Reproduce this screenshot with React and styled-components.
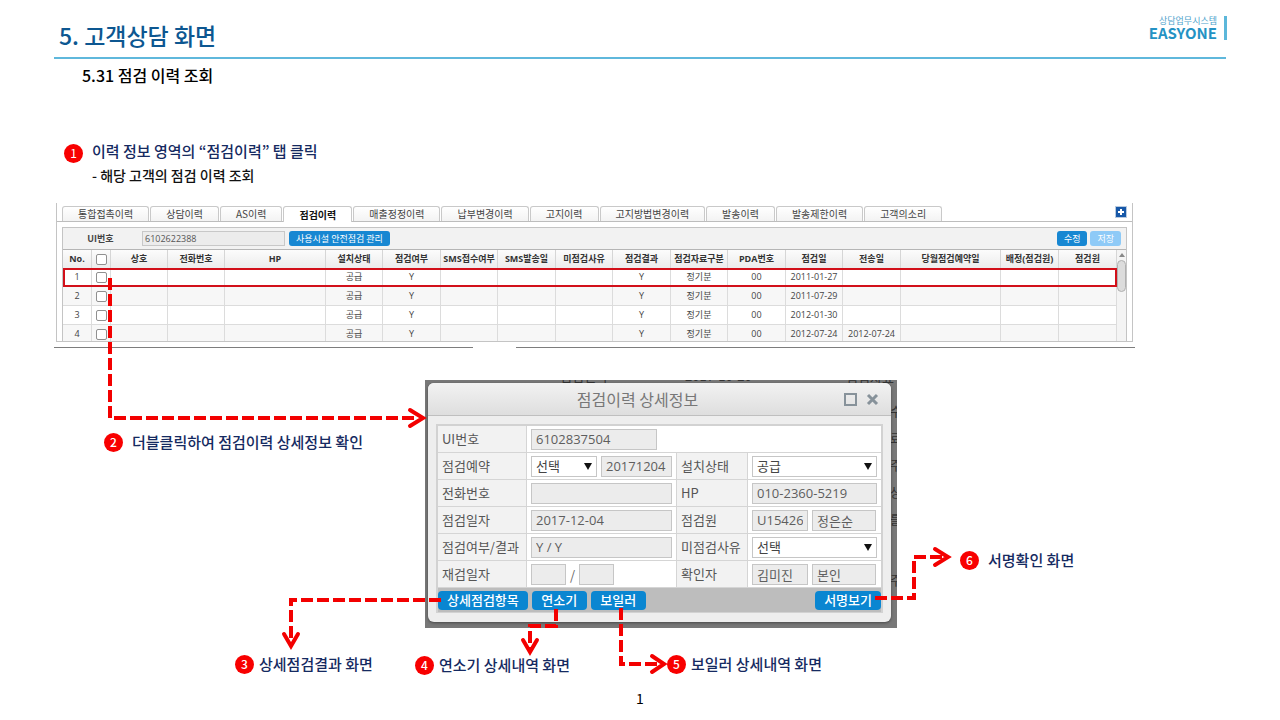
import React from "react";
import styled, { createGlobalStyle, css } from "styled-components";

const GlobalStyle = createGlobalStyle`
  *, *::before, *::after { box-sizing: border-box; }
  body {
    margin: 0;
    background: #fff;
    font-family: "Noto Sans CJK KR", "Noto Sans", sans-serif;
    color: #000;
  }
  h1, h2, h3, p { margin: 0; }
  button, input, select { font-family: inherit; margin: 0; }
`;

const Page = styled.main`
  position: relative;
  display: flex;
  flex-direction: column;
  min-height: 100vh;
`;

const Header = styled.header`
  display: flex;
  justify-content: space-between;
  align-items: flex-start;
  height: 59px;
  margin: 0 54px;
  padding: 16px 0 0 5px;
  border-bottom: 2px solid #5fb8dc;
`;

const Title = styled.h1`
  font-size: 23px;
  line-height: 38px;
  font-weight: 500;
  color: #0d5791;
`;

const Brand = styled.div`
  display: flex;
  flex-direction: column;
  align-items: flex-end;
  height: 24px;
  margin-right: -1px;
  padding-right: 7px;
  border-right: 3px solid #5cb7da;
`;

const BrandSmall = styled.span`
  font-size: 9px;
  line-height: 9px;
  color: #4ea3cc;
`;

const BrandName = styled.strong`
  font-size: 15px;
  line-height: 15px;
  font-weight: 700;
  color: #2492c4;
`;

const Subtitle = styled.h2`
  margin: 0 82px;
  font-size: 16px;
  line-height: 32px;
  font-weight: 500;
`;

const Step = styled.section`
  display: flex;
  align-items: flex-start;
  gap: 9px;
  margin: 48px 64px 0;
`;

const Badge = styled.span`
  flex: none;
  width: 19px;
  height: 19px;
  border-radius: 50%;
  background: #f80000;
  color: #fff;
  font-size: 12px;
  line-height: 18px;
  text-align: center;
`;

const StepBadge = styled(Badge)`
  margin-top: 5px;
`;

const StepTitle = styled.h3`
  font-size: 15px;
  line-height: 24px;
  font-weight: 500;
  color: #152a61;
`;

const StepNote = styled.p`
  font-size: 14px;
  line-height: 24px;
  font-weight: 500;
  color: #111;
`;

const Shot = styled.section`
  margin: 16px 145px 0 54px;
`;

const Panel = styled.div`
  height: 139px;
  margin: 0 2px;
  padding: 3px 5px 0;
  border: solid #c4c4c4;
  border-width: 0 1px 1px;
  overflow: hidden;
`;

const TabBar = styled.nav`
  display: flex;
  gap: 1px;
  height: 16px;
  margin: 0 -5px;
  padding: 0 5px;
  border-bottom: 1px solid #bdbdbd;
`;

const Tab = styled.button`
  height: 15px;
  padding: 0 15px;
  border: 1px solid #c9c9c9;
  border-bottom: 0;
  border-radius: 3px 3px 0 0;
  background: linear-gradient(#fff, #f3f3f3);
  color: #444;
  font-size: 10px;
  line-height: 14px;
  white-space: nowrap;
  ${(p) =>
    p.$active &&
    css`
      height: 16px;
      background: #fff;
      color: #111;
      font-weight: 700;
    `}
`;

const AddButton = styled.button`
  width: 12px;
  height: 12px;
  margin-left: auto;
  padding: 0;
  border: 1px solid #b9cbe0;
  background: #fff;
  svg { display: block; }
`;

const Listing = styled.div`
  margin-top: 5px;
  border: solid #c4c4c4;
  border-width: 1px 1px 0;
`;

const SearchBar = styled.div`
  display: flex;
  align-items: center;
  gap: 4px;
  height: 22px;
  padding-right: 5px;
  background: #f2f2f2;
  border-bottom: 1px solid #b5b5b5;
`;

const SearchLabel = styled.label`
  width: 75px;
  font-size: 9px;
  line-height: 16px;
  font-weight: 700;
  text-align: center;
  color: #444;
`;

const SearchInput = styled.input`
  width: 143px;
  height: 15px;
  padding: 0 2px;
  border: 1px solid #c8c8c8;
  background: #ececec;
  color: #555;
  font-family: "Open Sans", sans-serif;
  font-size: 9px;
  line-height: 13px;
`;

const SmallButton = styled.button`
  height: 15px;
  padding: 0 7px;
  border: 0;
  border-radius: 3px;
  background: ${(p) => (p.$pale ? "#8ecaf7" : "#1787d2")};
  color: #fff;
  font-size: 9px;
  line-height: 15px;
  white-space: nowrap;
`;

const ButtonPair = styled.div`
  display: flex;
  gap: 3px;
  margin-left: auto;
`;

const GridArea = styled.div`
  display: flex;
`;

const Grid = styled.table`
  flex: 1;
  width: 100%;
  table-layout: fixed;
  border-collapse: separate;
  border-spacing: 0;
  font-family: "Open Sans", "Noto Sans CJK KR", sans-serif;
  font-size: 9px;
  line-height: 16px;
  color: #444;
`;

const HeadCell = styled.th`
  height: 18px;
  padding: 0;
  border-right: 1px solid #d6d6d6;
  background: linear-gradient(#fcfcfc, #ececec);
  font-weight: 700;
  color: #333;
  white-space: nowrap;
`;

const Cell = styled.td`
  height: 19px;
  padding: 0;
  border: solid #dcdcdc;
  border-width: 0 1px 1px 0;
  text-align: center;
  white-space: nowrap;
`;

const Row = styled.tr`
  background: ${(p) => (p.$even ? "#f7f7f7" : "#fff")};
  ${(p) =>
    p.$marked &&
    css`
      outline: 2px solid #d2101a;
      outline-offset: -2px;
    `}
`;

const Check = styled.input`
  appearance: none;
  display: block;
  width: 11px;
  height: 11px;
  margin: 0 auto;
  border: 1px solid #909090;
  border-radius: 2px;
  background: #fff;
`;

const ScrollTrack = styled.div`
  width: 11px;
  padding-top: 3px;
  background: #f4f4f4;
  svg { display: block; margin: 0 auto 3px; }
`;

const ScrollThumb = styled.div`
  width: 9px;
  height: 32px;
  margin: 0 auto;
  border: 1px solid #b0b0b0;
  border-radius: 5px;
  background: #dcdcdc;
`;

const RuleRow = styled.div`
  display: flex;
  gap: 43px;
  margin-top: 5px;
`;

const Rule = styled.div`
  flex: ${(p) => p.$grow};
  height: 1px;
  background: #7d7d7d;
`;

const Backdrop = styled.div`
  position: relative;
  width: 472px;
  margin: 32px 0 0 425px;
  padding: 3px 6px 6px 3px;
  background: #787878;
  overflow: hidden;
`;

const Behind = styled.span`
  position: absolute;
  left: ${(p) => p.$x}px;
  top: ${(p) => p.$y}px;
  font-size: 13px;
  line-height: 18px;
  color: #333;
  white-space: nowrap;
`;

const Dialog = styled.section`
  position: relative;
  padding-bottom: 9px;
  border-radius: 6px;
  background: #eeeeee;
  box-shadow: 0 1px 3px rgba(0, 0, 0, 0.4);
`;

const DialogHead = styled.header`
  display: grid;
  grid-template-columns: 1fr auto 1fr;
  align-items: center;
  height: 33px;
  padding: 0 12px;
  border-bottom: 1px solid #bfbfbf;
  border-radius: 6px 6px 0 0;
  background: linear-gradient(#f2f2f2, #dedede);
`;

const DialogTitle = styled.h3`
  grid-column: 2;
  margin-right: 44px;
  font-size: 16px;
  line-height: 24px;
  font-weight: 400;
  color: #777;
`;

const WindowButtons = styled.div`
  display: flex;
  justify-content: flex-end;
  gap: 9px;
`;

const WindowButton = styled.button`
  padding: 0;
  border: 0;
  background: none;
  svg { display: block; }
`;

const FormBox = styled.form`
  margin: 8px 8px 0;
  border: solid #d2d2d2;
  border-width: 2px 2px 1px;
`;

const Fields = styled.div`
  display: grid;
  grid-template-columns: 89px 150px 71px 1fr;
  grid-template-rows: repeat(6, 27px);
  background: #fff;
`;

const FieldLabel = styled.label`
  padding-left: 4px;
  border: solid #d5d5d5;
  border-width: 0 1px 1px 0;
  background: #f2f2f2;
  color: #555;
  font-size: 13px;
  line-height: 25px;
  white-space: nowrap;
`;

const FieldBody = styled.div`
  display: flex;
  align-items: center;
  gap: 4px;
  grid-column: ${(p) => (p.$wide ? "span 3" : "auto")};
  padding: 0 4px;
  border: solid #d5d5d5;
  border-width: 0 ${(p) => (p.$wide || p.$last ? 0 : 1)}px 1px 0;
  color: #666;
  font-size: 13px;
`;

const controlSize = css`
  width: ${(p) => (p.$w ? `${p.$w}px` : "100%")};
  min-width: 0;
  height: 21px;
  border: 1px solid #c6c6c6;
  border-radius: 0;
  padding: 0 4px;
  font-family: "Open Sans", "Noto Sans CJK KR", sans-serif;
  font-size: 13px;
  line-height: 19px;
`;

const TextInput = styled.input`
  ${controlSize}
  background: #ececec;
  color: #5e5e5e;
`;

const SelectWrap = styled.span`
  position: relative;
  display: block;
  flex: ${(p) => (p.$w ? "none" : 1)};
  width: ${(p) => (p.$w ? `${p.$w}px` : "auto")};
  svg {
    position: absolute;
    top: 7px;
    right: 5px;
    pointer-events: none;
  }
`;

const SelectBox = styled.select`
  ${controlSize}
  display: block;
  width: 100%;
  appearance: none;
  background: #fff;
  color: #444;
`;

const ActionBar = styled.div`
  display: flex;
  align-items: center;
  gap: 4px;
  height: 24px;
  background: #bdbdbd;
`;

const ActionButton = styled.button`
  min-width: 55px;
  height: 19px;
  padding: 0 9px;
  border: 0;
  border-radius: 4px;
  background: #0a86d1;
  color: #fff;
  font-size: 13px;
  line-height: 18px;
  font-weight: 500;
  white-space: nowrap;
  margin-left: ${(p) => (p.$end ? "auto" : 0)};
`;

const Callout = styled.div`
  position: absolute;
  left: ${(p) => p.$x}px;
  top: ${(p) => p.$y}px;
  display: flex;
  align-items: center;
  gap: ${(p) => (p.$tight ? 5 : 9)}px;
  font-size: 15px;
  line-height: 24px;
  font-weight: 500;
  color: #152a61;
  white-space: nowrap;
`;

const Arrows = styled.svg`
  position: absolute;
  left: 0;
  top: 0;
  pointer-events: none;
`;

const PageNumber = styled.footer`
  margin-top: auto;
  padding-bottom: 10px;
  font-size: 14px;
  line-height: 24px;
  text-align: center;
`;

const tabs = [
  "통합접촉이력", "상담이력", "AS이력", "점검이력", "매출정정이력", "납부변경이력",
  "고지이력", "고지방법변경이력", "발송이력", "발송제한이력", "고객의소리",
];

const columns = [
  ["No.", 29], ["check", 19], ["상호", 57], ["전화번호", 57], ["HP", 101],
  ["설치상태", 57], ["점검여부", 58], ["SMS접수여부", 57], ["SMS발송일", 58],
  ["미점검사유", 57], ["점검결과", 58], ["점검자료구분", 57], ["PDA번호", 58],
  ["점검일", 57], ["전송일", 58], ["당월점검예약일", 100], ["배정(점검원)", 58],
  ["점검원", 58],
];

const rows = [
  { date: "2011-01-27", sent: "" },
  { date: "2011-07-29", sent: "" },
  { date: "2012-01-30", sent: "" },
  { date: "2012-07-24", sent: "2012-07-24" },
];

const arrows = [
  { line: "M110 278V418H418", head: "M410 410L423 418L410 426" },
  { line: "M441 600H291V642", head: "M284 634L291 646L298 634" },
  { line: "M556 609V626H530V648", head: "M523 640L530 652L537 640" },
  { line: "M621 608V664H660", head: "M652 656L664 664L652 672" },
  { line: "M875 598H914V557H944", head: "M935 549L948 557L935 565" },
];

const callouts = [
  { n: 2, x: 104, y: 430, text: "더블클릭하여 점검이력 상세정보 확인" },
  { n: 3, x: 235, y: 652, text: "상세점검결과 화면", tight: true },
  { n: 4, x: 415, y: 653, text: "연소기 상세내역 화면", tight: true },
  { n: 5, x: 667, y: 652, text: "보일러 상세내역 화면", tight: true },
  { n: 6, x: 960, y: 548, text: "서명확인 화면" },
];

function DropDown({ id, value, width }) {
  return (
    <SelectWrap $w={width}>
      <SelectBox id={id} defaultValue={value}>
        <option>{value}</option>
      </SelectBox>
      <svg width="8" height="7" aria-hidden="true">
        <path d="M0 0H8L4 7Z" fill="#111" />
      </svg>
    </SelectWrap>
  );
}

function HistoryTable() {
  return (
    <Grid>
      <colgroup>
        {columns.map(([name, width]) => (
          <col key={name} width={width} />
        ))}
      </colgroup>
      <thead>
        <tr>
          {columns.map(([name]) => (
            <HeadCell key={name} scope="col">
              {name === "check" ? <Check type="checkbox" aria-label="전체 선택" /> : name}
            </HeadCell>
          ))}
        </tr>
      </thead>
      <tbody>
        {rows.map((row, i) => (
          <Row key={row.date} $even={i % 2 === 1} $marked={i === 0}>
            <Cell>{i + 1}</Cell>
            <Cell>
              <Check type="checkbox" aria-label={`${i + 1}번 선택`} />
            </Cell>
            <Cell />
            <Cell />
            <Cell />
            <Cell>공급</Cell>
            <Cell>Y</Cell>
            <Cell />
            <Cell />
            <Cell />
            <Cell>Y</Cell>
            <Cell>정기분</Cell>
            <Cell>00</Cell>
            <Cell>{row.date}</Cell>
            <Cell>{row.sent}</Cell>
            <Cell />
            <Cell />
            <Cell />
          </Row>
        ))}
      </tbody>
    </Grid>
  );
}

function HistoryPanel() {
  return (
    <Panel>
      <TabBar>
        {tabs.map((name) => (
          <Tab key={name} type="button" $active={name === "점검이력"}>
            {name}
          </Tab>
        ))}
        <AddButton type="button" aria-label="추가">
          <svg width="10" height="10">
            <rect width="10" height="10" fill="#1758a8" />
            <path d="M5 2V8M2 5H8" stroke="#fff" strokeWidth="2" />
          </svg>
        </AddButton>
      </TabBar>
      <Listing>
        <SearchBar>
          <SearchLabel htmlFor="ui-no">UI번호</SearchLabel>
          <SearchInput id="ui-no" defaultValue="6102622388" readOnly />
          <SmallButton type="button">사용시설 안전점검 관리</SmallButton>
          <ButtonPair>
            <SmallButton type="button">수정</SmallButton>
            <SmallButton type="button" $pale>저장</SmallButton>
          </ButtonPair>
        </SearchBar>
        <GridArea>
          <HistoryTable />
          <ScrollTrack>
            <svg width="6" height="4" aria-hidden="true">
              <path d="M0 4L3 0L6 4Z" fill="#888" />
            </svg>
            <ScrollThumb />
          </ScrollTrack>
        </GridArea>
      </Listing>
    </Panel>
  );
}

function DetailDialog() {
  return (
    <Dialog aria-label="점검이력 상세정보">
      <DialogHead>
        <DialogTitle>점검이력 상세정보</DialogTitle>
        <WindowButtons>
          <WindowButton type="button" aria-label="최대화">
            <svg width="13" height="13">
              <rect x="1" y="1" width="11" height="11" fill="none" stroke="#87929a" strokeWidth="2" />
            </svg>
          </WindowButton>
          <WindowButton type="button" aria-label="닫기">
            <svg width="13" height="13">
              <path d="M2 2L11 11M11 2L2 11" stroke="#87929a" strokeWidth="3" />
            </svg>
          </WindowButton>
        </WindowButtons>
      </DialogHead>
      <FormBox>
        <Fields>
          <FieldLabel htmlFor="d-ui">UI번호</FieldLabel>
          <FieldBody $wide>
            <TextInput id="d-ui" $w={126} defaultValue="6102837504" readOnly />
          </FieldBody>

          <FieldLabel htmlFor="d-book">점검예약</FieldLabel>
          <FieldBody>
            <DropDown id="d-book" value="선택" width={66} />
            <TextInput aria-label="점검예약일" defaultValue="20171204" readOnly />
          </FieldBody>
          <FieldLabel htmlFor="d-state">설치상태</FieldLabel>
          <FieldBody $last>
            <DropDown id="d-state" value="공급" />
          </FieldBody>

          <FieldLabel htmlFor="d-tel">전화번호</FieldLabel>
          <FieldBody>
            <TextInput id="d-tel" readOnly />
          </FieldBody>
          <FieldLabel htmlFor="d-hp">HP</FieldLabel>
          <FieldBody $last>
            <TextInput id="d-hp" defaultValue="010-2360-5219" readOnly />
          </FieldBody>

          <FieldLabel htmlFor="d-date">점검일자</FieldLabel>
          <FieldBody>
            <TextInput id="d-date" defaultValue="2017-12-04" readOnly />
          </FieldBody>
          <FieldLabel htmlFor="d-man">점검원</FieldLabel>
          <FieldBody $last>
            <TextInput id="d-man" $w={56} defaultValue="U15426" readOnly />
            <TextInput aria-label="점검원 이름" $w={64} defaultValue="정은순" readOnly />
          </FieldBody>

          <FieldLabel htmlFor="d-result">점검여부/결과</FieldLabel>
          <FieldBody>
            <TextInput id="d-result" defaultValue="Y / Y" readOnly />
          </FieldBody>
          <FieldLabel htmlFor="d-why">미점검사유</FieldLabel>
          <FieldBody $last>
            <DropDown id="d-why" value="선택" />
          </FieldBody>

          <FieldLabel htmlFor="d-again">재검일자</FieldLabel>
          <FieldBody>
            <TextInput id="d-again" $w={35} readOnly />
            /
            <TextInput aria-label="재검일자 끝" $w={35} readOnly />
          </FieldBody>
          <FieldLabel htmlFor="d-sign">확인자</FieldLabel>
          <FieldBody $last>
            <TextInput id="d-sign" $w={56} defaultValue="김미진" readOnly />
            <TextInput aria-label="확인자 관계" $w={64} defaultValue="본인" readOnly />
          </FieldBody>
        </Fields>
        <ActionBar>
          <ActionButton type="button">상세점검항목</ActionButton>
          <ActionButton type="button">연소기</ActionButton>
          <ActionButton type="button">보일러</ActionButton>
          <ActionButton type="button" $end>서명보기</ActionButton>
        </ActionBar>
      </FormBox>
    </Dialog>
  );
}

export default function App() {
  return (
    <Page>
      <GlobalStyle />
      <Header>
        <Title>5. 고객상담 화면</Title>
        <Brand>
          <BrandSmall>상담업무시스템</BrandSmall>
          <BrandName>EASYONE</BrandName>
        </Brand>
      </Header>
      <Subtitle>5.31 점검 이력 조회</Subtitle>
      <Step>
        <StepBadge>1</StepBadge>
        <div>
          <StepTitle>이력 정보 영역의 “점검이력” 탭 클릭</StepTitle>
          <StepNote>- 해당 고객의 점검 이력 조회</StepNote>
        </div>
      </Step>
      <Shot>
        <HistoryPanel />
        <RuleRow>
          <Rule $grow={419} />
          <Rule $grow={619} />
        </RuleRow>
      </Shot>
      <Backdrop>
        <Behind $x={135} $y={-13}>점검결과</Behind>
        <Behind $x={260} $y={-13}>2017-10-20</Behind>
        <Behind $x={421} $y={-11}>점검자료</Behind>
        <Behind $x={465} $y={22}>수</Behind>
        <Behind $x={465} $y={49}>료</Behind>
        <Behind $x={465} $y={76}>주</Behind>
        <Behind $x={465} $y={103}>상</Behind>
        <Behind $x={465} $y={130}>를</Behind>
        <Behind $x={465} $y={191}>주</Behind>
        <DetailDialog />
      </Backdrop>
      <PageNumber>1</PageNumber>
      {callouts.map((c) => (
        <Callout key={c.n} $x={c.x} $y={c.y} $tight={c.tight}>
          <Badge>{c.n}</Badge>
          <span>{c.text}</span>
        </Callout>
      ))}
      <Arrows width="960" height="680" fill="none" stroke="#f30000" strokeWidth="4" aria-hidden="true">
        {arrows.map((a) => (
          <g key={a.line}>
            <path d={a.line} strokeDasharray="12 4" />
            <path d={a.head} strokeLinecap="round" />
          </g>
        ))}
      </Arrows>
    </Page>
  );
}
